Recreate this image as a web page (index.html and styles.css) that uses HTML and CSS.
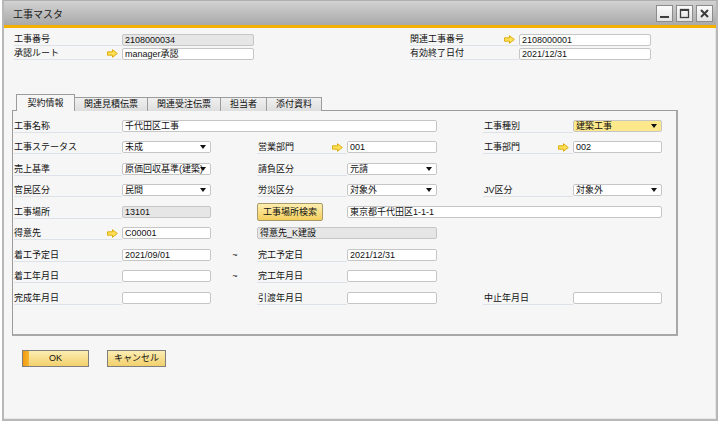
FILE: index.html
```html
<!DOCTYPE html>
<html lang="ja">
<head>
<meta charset="utf-8">
<link rel="stylesheet" href="styles.css">
</head>
<body>
<div class="window">
  <div class="titlebar">
    <span class="title">工事マスタ</span>
    <div class="controls">
      <span class="ctl"><svg width="11" height="11" viewBox="0 0 11 11"><rect x="1" y="8" width="9" height="2" fill="#3c3c3c"/></svg></span>
      <span class="ctl"><svg width="11" height="11" viewBox="0 0 11 11"><rect x="1.5" y="1.5" width="8" height="8" fill="none" stroke="#3c3c3c" stroke-width="1.3"/><rect x="1" y="1" width="9" height="2" fill="#3c3c3c"/></svg></span>
      <span class="ctl"><svg width="11" height="11" viewBox="0 0 11 11"><path d="M2 2 L9 9 M9 2 L2 9" stroke="#3c3c3c" stroke-width="2"/></svg></span>
    </div>
  </div>
  <div class="orange"></div>

  <div class="header">
    <div class="hgroup">
      <div class="lbl">工事番号</div><div class="inp dis">2108000034</div>
      <div class="lbl">承認ルート<svg class="arr" width="11" height="9" viewBox="0 0 11 9"><path d="M0.5 2.8 H5.5 V0.7 L10.3 4.5 L5.5 8.3 V6.2 H0.5 Z" fill="#ffdf55" stroke="#d9a800" stroke-width="0.9"/></svg></div><div class="inp">manager承認</div>
    </div>
    <div class="hgroup right">
      <div class="lbl">関連工事番号<svg class="arr" width="11" height="9" viewBox="0 0 11 9"><path d="M0.5 2.8 H5.5 V0.7 L10.3 4.5 L5.5 8.3 V6.2 H0.5 Z" fill="#ffdf55" stroke="#d9a800" stroke-width="0.9"/></svg></div><div class="inp">2108000001</div>
      <div class="lbl">有効終了日付</div><div class="inp">2021/12/31</div>
    </div>
  </div>

  <div class="tabs">
    <div class="tab active t1">契約情報</div>
    <div class="tab t2">関連見積伝票</div>
    <div class="tab t3">関連受注伝票</div>
    <div class="tab t4">担当者</div>
    <div class="tab t5">添付資料</div>
  </div>

  <div class="panel">
    <div class="grid">
      <!-- row 1 -->
      <div class="lbl c1">工事名称</div>
      <div class="inp span25">千代田区工事</div>
      <div class="lbl c7">工事種別</div>
      <div class="inp sel yellow c8">建築工事<i class="tri"></i></div>
      <!-- row 2 -->
      <div class="lbl c1">工事ステータス</div>
      <div class="inp sel c2">未成<i class="tri"></i></div>
      <div class="lbl c4">営業部門<svg class="arr" width="11" height="9" viewBox="0 0 11 9"><path d="M0.5 2.8 H5.5 V0.7 L10.3 4.5 L5.5 8.3 V6.2 H0.5 Z" fill="#ffdf55" stroke="#d9a800" stroke-width="0.9"/></svg></div>
      <div class="inp c5">001</div>
      <div class="lbl c7">工事部門<svg class="arr" width="11" height="9" viewBox="0 0 11 9"><path d="M0.5 2.8 H5.5 V0.7 L10.3 4.5 L5.5 8.3 V6.2 H0.5 Z" fill="#ffdf55" stroke="#d9a800" stroke-width="0.9"/></svg></div>
      <div class="inp c8">002</div>
      <!-- row 3 -->
      <div class="lbl c1">売上基準</div>
      <div class="inp sel c2">原価回収基準(建築)<i class="tri"></i></div>
      <div class="lbl c4">請負区分</div>
      <div class="inp sel c5">元請<i class="tri"></i></div>
      <!-- row 4 -->
      <div class="lbl c1">官民区分</div>
      <div class="inp sel c2">民間<i class="tri"></i></div>
      <div class="lbl c4">労災区分</div>
      <div class="inp sel c5">対象外<i class="tri"></i></div>
      <div class="lbl c7">JV区分</div>
      <div class="inp sel c8">対象外<i class="tri"></i></div>
      <!-- row 5 -->
      <div class="lbl c1">工事場所</div>
      <div class="inp dis c2">13101</div>
      <div class="btn-search c4">工事場所検索</div>
      <div class="inp span58">東京都千代田区1-1-1</div>
      <!-- row 6 -->
      <div class="lbl c1">得意先<svg class="arr" width="11" height="9" viewBox="0 0 11 9"><path d="M0.5 2.8 H5.5 V0.7 L10.3 4.5 L5.5 8.3 V6.2 H0.5 Z" fill="#ffdf55" stroke="#d9a800" stroke-width="0.9"/></svg></div>
      <div class="inp c2">C00001</div>
      <div class="inp dis span45">得意先_K建設</div>
      <!-- row 7 -->
      <div class="lbl c1">着工予定日</div>
      <div class="inp c2">2021/09/01</div>
      <div class="tilde c3">~</div>
      <div class="lbl c4">完工予定日</div>
      <div class="inp c5">2021/12/31</div>
      <!-- row 8 -->
      <div class="lbl c1">着工年月日</div>
      <div class="inp c2"></div>
      <div class="tilde c3">~</div>
      <div class="lbl c4">完工年月日</div>
      <div class="inp c5"></div>
      <!-- row 9 -->
      <div class="lbl c1">完成年月日</div>
      <div class="inp c2"></div>
      <div class="lbl c4">引渡年月日</div>
      <div class="inp c5"></div>
      <div class="lbl c7">中止年月日</div>
      <div class="inp c8"></div>
    </div>
  </div>

  <div class="buttons">
    <div class="btn ok">OK</div>
    <div class="btn cancel">キャンセル</div>
  </div>
</div>
</body>
</html>
```

FILE: styles.css
```css
* { box-sizing: border-box; }
html, body { margin: 0; padding: 0; background: #ffffff; }
body {
  width: 720px;
  height: 424px;
  overflow: hidden;
  font-family: "Liberation Sans", "Noto Sans CJK JP", sans-serif;
  font-size: 9px;
  color: #111;
}
.window {
  margin: 0 2px 0 2px;
  width: 716px;
  height: 421px;
  background: #f6f6f6;
  border: 2px solid #b8b8b8;
  border-top: 1px solid #b0b0b0;
  box-shadow: inset -1px -1px 0 #e6e6e6;
}
.titlebar {
  height: 24px;
  background: linear-gradient(#d2d2d2, #a9a9a9);
  display: flex;
  align-items: center;
  justify-content: space-between;
  padding: 0 3px 0 9px;
}
.title { font-size: 10px; color: #1a1a1a; }
.controls { display: flex; gap: 3px; }
.ctl {
  width: 17px;
  height: 17px;
  border: 1px solid #8c8c8c;
  background: linear-gradient(#fbfbfb, #e2e2e2);
  display: flex;
  align-items: center;
  justify-content: center;
}
.orange { height: 3px; background: #f3b000; }

.header {
  margin: 6px 0 0 10px;
  display: flex;
  gap: 156px;
}
.hgroup {
  display: grid;
  grid-template-columns: 108px 132px;
  grid-auto-rows: 12px;
  row-gap: 2px;
}
.hgroup.right { grid-template-columns: 109px 132px; }

.lbl {
  display: flex;
  align-items: flex-end;
  justify-content: space-between;
  height: 13px;
  line-height: 11px;
  border-bottom: 1px solid #dde2e9;
  white-space: nowrap;
  padding-right: 4px;
}
.hgroup .lbl { height: 12px; }
.arr { flex: none; margin-bottom: 1px; }

.inp {
  height: 12px;
  line-height: 10px;
  border: 1px solid #c6c6c6;
  border-radius: 2px;
  background: #ffffff;
  padding: 0 2px;
  white-space: nowrap;
  overflow: hidden;
  position: relative;
}
.inp.dis { background: #e6e6e6; }
.inp.yellow { background: #fde98c; }
.inp.sel { padding-right: 12px; }
.tri {
  position: absolute;
  right: 4px;
  top: 3px;
  width: 0;
  height: 0;
  border-left: 3.5px solid transparent;
  border-right: 3.5px solid transparent;
  border-top: 4px solid #111;
}

.tabs {
  margin: 34px 0 -1px 12px;
  height: 17px;
  display: flex;
  align-items: flex-end;
  position: relative;
}
.tab {
  height: 14px;
  line-height: 12px;
  text-align: center;
  border: 1px solid #9c9c9c;
  border-bottom: none;
  background: linear-gradient(#f0f0f0, #dedede);
  margin-left: -1px;
}
.tab.active {
  height: 17px;
  line-height: 17px;
  background: #f6f6f6;
  margin-left: 0;
  position: relative;
  z-index: 2;
}
.t1 { width: 59px; }
.t2 { width: 74px; }
.t3 { width: 74px; }
.t4 { width: 47px; }
.t5 { width: 56px; }

.panel {
  margin-left: 8px;
  width: 666px;
  height: 226px;
  border: 1px solid #9c9c9c;
  border-right: 2px solid #a8a8a8;
  border-bottom: 2px solid #a8a8a8;
  padding: 4px 0 0 1px;
}
.grid {
  display: grid;
  grid-template-columns: 108px 89px 46px 90px 90px 46px 90px 89px;
  grid-auto-rows: 21.5px;
  align-items: center;
}
.c1 { grid-column: 1; }
.c2 { grid-column: 2; }
.c3 { grid-column: 3; }
.c4 { grid-column: 4; }
.c5 { grid-column: 5; }
.c7 { grid-column: 7; }
.c8 { grid-column: 8; }
.span25 { grid-column: 2 / 6; }
.span58 { grid-column: 5 / 9; }
.span45 { grid-column: 4 / 6; }
.grid .lbl.c4, .grid .lbl.c7 { padding-left: 1px; }
.grid .lbl { margin-top: 1px; }
.tilde { text-align: center; padding-left: 2px; }

.btn-search {
  width: 66px;
  height: 18px;
  line-height: 16px;
  text-align: center;
  border: 1px solid #a99a6a;
  border-radius: 2px;
  background: linear-gradient(#fdeeb0, #f4cf5c);
}

.buttons {
  margin: 14px 0 0 18px;
  display: flex;
  gap: 18px;
}
.btn {
  height: 17px;
  line-height: 15px;
  text-align: center;
  border: 1px solid #7e7e7e;
  background: linear-gradient(#fcedb2, #f2d06c);
}
.btn.ok {
  width: 67px;
  background: linear-gradient(90deg, #f39a10 0, #f7b530 6px, transparent 6px), linear-gradient(#fcedb2, #f2d06c);
}
.btn.cancel { width: 59px; }
```
